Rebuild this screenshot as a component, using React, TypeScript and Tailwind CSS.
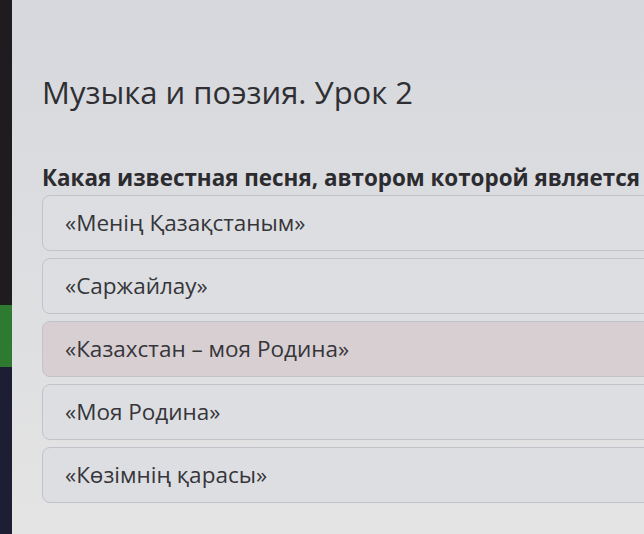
import React from "react";

const options = [
  { t: "«Менің Қазақстаным»", pink: false },
  { t: "«Саржайлау»", pink: false },
  { t: "«Казахстан – моя Родина»", pink: true },
  { t: "«Моя Родина»", pink: false },
  { t: "«Көзімнің қарасы»", pink: false },
];

export default function App() {
  return (
    <div
      className="flex w-[644px] h-[534px] overflow-hidden bg-gradient-to-b from-[#d6d8dd] to-[#e4e4e4]"
      style={{ fontFamily: '"Open Sans", "Noto Sans", sans-serif' }}
    >
      <div className="flex flex-col w-[12px] shrink-0">
        <div className="h-[305px] bg-[#1f1c20]" />
        <div className="h-[62px] bg-[#2e7a30]" />
        <div className="flex-1 bg-[#1d1d34]" />
      </div>
      <div className="flex-1 pl-[30px] pt-[71px] min-w-0">
        <div className="text-[31px] leading-[42px] text-[#2f2f33] whitespace-nowrap">
          Музыка и поэзия. Урок 2
        </div>
        <div className="mt-[50px] text-[22.4px] leading-[30px] font-bold text-[#2b2b30] whitespace-nowrap">
          Какая известная песня, автором которой является
        </div>
        <div className="mt-[2px] flex flex-col gap-[7px] w-[700px]">
          {options.map((o) => (
            <div
              key={o.t}
              className={`h-[56px] flex items-center pl-[22px] rounded-[8px] border border-[#c2c3c8] text-[22.5px] text-[#35353a] whitespace-nowrap ${
                o.pink ? "bg-[#d8cfd3]" : "bg-[#dddee1]"
              }`}
            >
              {o.t}
            </div>
          ))}
        </div>
      </div>
    </div>
  );
}
